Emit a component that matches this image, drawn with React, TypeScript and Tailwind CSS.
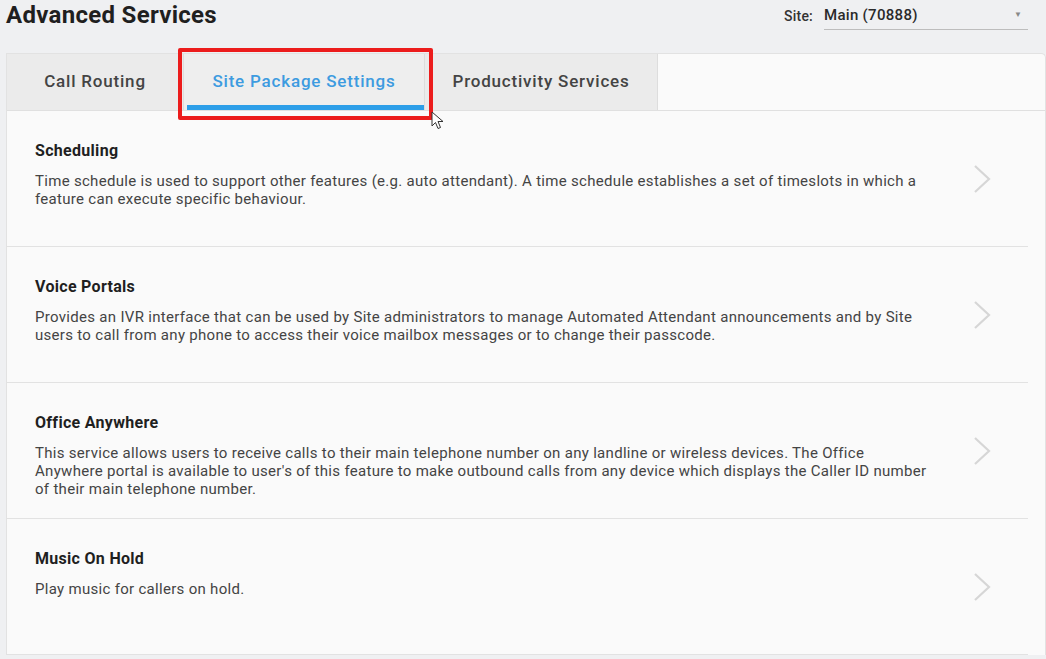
import React from "react";

const services = [
  {
    title: "Scheduling",
    body: "Time schedule is used to support other features (e.g. auto attendant). A time schedule establishes a set of timeslots in which a feature can execute specific behaviour.",
  },
  {
    title: "Voice Portals",
    body: "Provides an IVR interface that can be used by Site administrators to manage Automated Attendant announcements and by Site users to call from any phone to access their voice mailbox messages or to change their passcode.",
  },
  {
    title: "Office Anywhere",
    body: "This service allows users to receive calls to their main telephone number on any landline or wireless devices. The Office Anywhere portal is available to user's of this feature to make outbound calls from any device which displays the Caller ID number of their main telephone number.",
  },
  {
    title: "Music On Hold",
    body: "Play music for callers on hold.",
  },
];

function Chevron() {
  return (
    <svg width="20" height="30" viewBox="0 0 20 30" fill="none">
      <path d="M3 2 L17 15 L3 28" stroke="#d6d6d6" strokeWidth="2.2" strokeLinejoin="miter" />
    </svg>
  );
}

function Cursor() {
  return (
    <svg width="14" height="20" viewBox="0 0 14 20">
      <path d="M1 1 L1 15 L4.5 11.5 L7 17.5 L9.5 16.5 L7 10.5 L12 10.5 Z" fill="#fff" stroke="#333" strokeWidth="1" strokeLinejoin="round" />
    </svg>
  );
}

export default function App() {
  return (
    <div className="min-h-[659px] w-[1046px] bg-[#eff0f2] font-['Roboto',sans-serif] text-[#333]">
      <header className="flex h-[53px] items-start justify-between pl-[6px] pr-[18px]">
        <h1 className="pt-[1px] text-[24px] font-bold leading-[28px] tracking-[0.3px] text-[#1f1f1f]">Advanced Services</h1>
        <div className="flex items-start gap-[11px] pt-[5px]">
          <span className="pt-[1px] text-[14px] font-medium leading-[20px] tracking-[0.2px] text-[#333]">Site:</span>
          <div className="flex h-[25px] w-[204px] items-start justify-between border-b border-[#bdbdbd]">
            <span className="text-[15px] font-medium leading-[20px] tracking-[0.3px] text-[#2a2a2a]">Main (70888)</span>
            <span className="pr-[6px] pt-[6px] text-[8px] leading-none text-[#888]">▼</span>
          </div>
        </div>
      </header>

      <div className="ml-[6px] rounded-tr-[5px] border-l border-r border-t border-[#e2e2e2] bg-[#fafafa]">
        <div className="relative flex h-[57px] border-b border-[#e0e0e0]">
          <div className="flex w-[177px] items-center justify-center border-r border-[#dddddd] bg-[#ebebeb] text-[17px] font-medium tracking-[0.8px] text-[#444]">
            Call Routing
          </div>
          <div className="relative flex w-[241px] items-center justify-center border-r border-[#dddddd] bg-[#eeeeee] pb-[1px] text-[17px] font-medium tracking-[0.8px] text-[#3d9be0]">
            Site Package Settings
            <div className="absolute bottom-[0px] left-[3px] right-0 h-[5px] bg-[#2d9ee8]" />
          </div>
          <div className="flex w-[233px] items-center justify-center border-r border-[#dddddd] bg-[#ebebeb] text-[17px] font-medium tracking-[0.8px] text-[#444]">
            Productivity Services
          </div>
          <div className="pointer-events-none absolute left-[171px] top-[-6px] h-[72px] w-[255px] rounded-[2px] border-[4px] border-[#ec1c1c]" />
          <div className="pointer-events-none absolute left-[424px] top-[57px] z-10">
            <Cursor />
          </div>
        </div>

        <div className="pr-[17px]">
          {services.map((s) => (
            <div key={s.title} className="flex h-[136px] border-b border-[#e2e2e2]">
              <div className="flex-1 pl-[28px] pt-[30px]">
                <h2 className="text-[16px] font-bold leading-[20px] tracking-[0.3px] text-[#1f1f1f]">{s.title}</h2>
                <p className="mt-[11px] max-w-[900px] text-[15px] leading-[18px] tracking-[0.3px] text-[#444]">{s.body}</p>
              </div>
              <div className="flex w-[84px] items-center justify-start pl-[28px]">
                <Chevron />
              </div>
            </div>
          ))}
        </div>
      </div>
    </div>
  );
}
